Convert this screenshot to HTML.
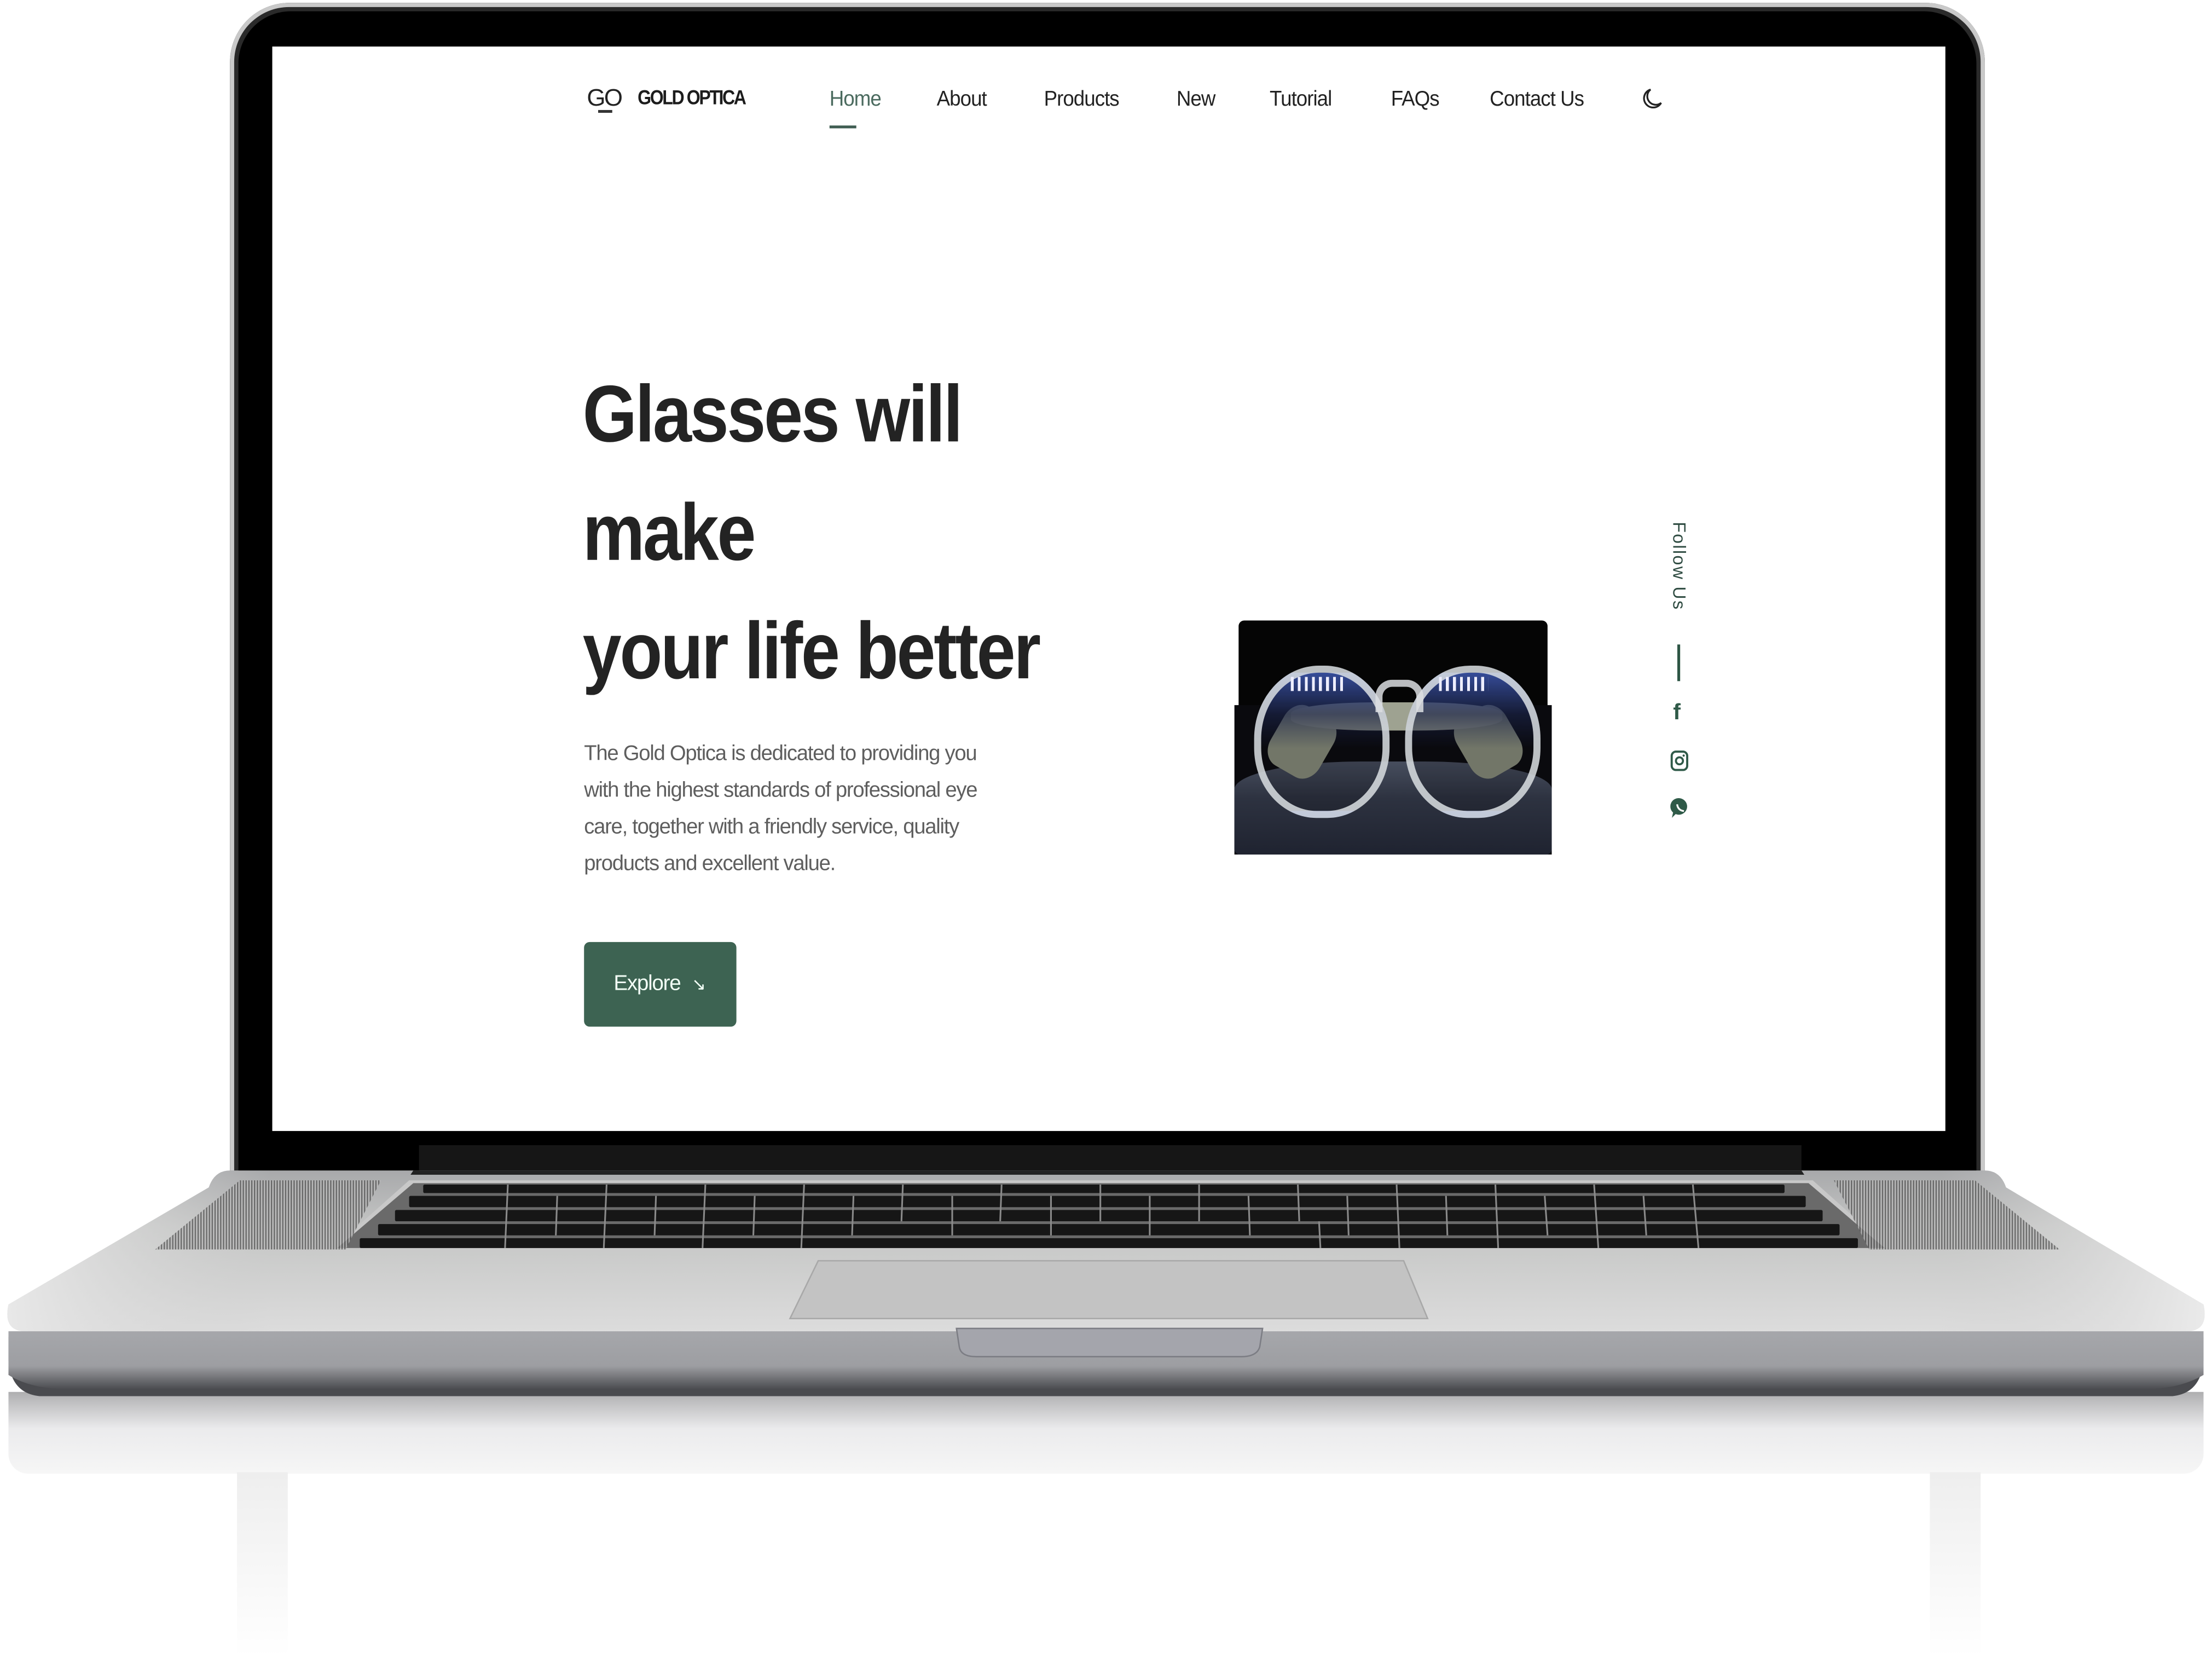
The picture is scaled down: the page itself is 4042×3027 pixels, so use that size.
<!DOCTYPE html>
<html><head><meta charset="utf-8"><style>
html,body{margin:0;padding:0;background:#fff;}
body{width:4042px;height:3027px;overflow:hidden;position:relative;}
#w{position:absolute;left:0;top:0;width:1568px;height:1175px;transform:scale(2.5778,2.5762);transform-origin:0 0;font-family:"Liberation Sans",sans-serif;}
.a{position:absolute;}
.nav{position:absolute;top:62px;font-size:15px;color:#222;letter-spacing:-0.4px;transform:scaleX(.95);transform-origin:0 0;}
p{margin:0}
</style></head><body><div id="w">

<div class="a" style="left:6px;top:987px;width:1556px;height:58px;background:linear-gradient(#9a9a9c,#e6e6e8 45%,#f4f4f4);border-radius:0 0 14px 14px;opacity:.8"></div>
<div class="a" style="left:168px;top:1044px;width:36px;height:131px;background:linear-gradient(#eee,#fff)"></div>
<div class="a" style="left:1368px;top:1044px;width:36px;height:131px;background:linear-gradient(#eee,#fff)"></div>

<div class="a" style="left:163px;top:2px;width:1244px;height:840px;background:#2a2a2a;border-radius:42px 42px 0 0;box-shadow:inset 0 0 0 3px #c9c9c9"></div>
<div class="a" style="left:169px;top:8px;width:1232px;height:834px;background:#000;border-radius:37px 37px 0 0"></div>
<div class="a" style="left:297px;top:812px;width:980px;height:24px;background:#161616"></div>

<svg class="a" style="left:0;top:820px" width="1568" height="180" viewBox="0 820 1568 180">
<defs>
<linearGradient id="dk" x1="0" y1="0" x2="0" y2="1"><stop offset="0" stop-color="#a8a9ab"/><stop offset=".35" stop-color="#c4c5c4"/><stop offset="1" stop-color="#dcdcdc"/></linearGradient>
<linearGradient id="fr" x1="0" y1="0" x2="0" y2="1"><stop offset="0" stop-color="#a6a7ab"/><stop offset=".6" stop-color="#9d9ea2"/><stop offset="1" stop-color="#4b4c50"/></linearGradient>
<linearGradient id="sd" x1="0" y1="0" x2="1" y2="0"><stop offset="0" stop-color="#e8e8e8"/><stop offset=".12" stop-color="#d0d0d0" stop-opacity="0"/><stop offset=".88" stop-color="#d0d0d0" stop-opacity="0"/><stop offset="1" stop-color="#eaeaea"/></linearGradient>
<pattern id="sp" width="2" height="2" patternUnits="userSpaceOnUse"><rect width="1" height="2" fill="#555"/><rect x="1" width="1" height="2" fill="#bbb"/></pattern>
</defs>
<path d="M28 990 Q8 988 6 965 L6 948 L1562 948 L1562 965 Q1560 988 1540 990 Z" fill="#4a4b4f"/>
<path d="M6 944 L1562 944 L1562 975 Q1545 985 1520 985 L48 985 Q22 985 6 975 Z" fill="url(#fr)"/>
<path d="M163 830 L1407 830 Q1418 830 1422 842 L1562 925 Q1566 944 1550 944 L18 944 Q2 944 6 925 L148 842 Q152 830 163 830 Z" fill="url(#dk)"/>
<path d="M163 830 L1407 830 Q1418 830 1422 842 L1562 925 Q1566 944 1550 944 L18 944 Q2 944 6 925 L148 842 Q152 830 163 830 Z" fill="url(#sd)"/>
<path d="M293 830 L1277 830 L1279 833 L291 833 Z" fill="#222"/>
<polygon points="290,837 1285,837 1340,886 235,886" fill="#c8c8c8"/>
<polygon points="293,839 1282,839 1336,885 239,885" fill="#6a6a6a"/>
<g fill="#161616">
<rect x="300" y="840" width="965" height="6" rx="1"/>
<rect x="290" y="848" width="990" height="8" rx="1"/>
<rect x="280" y="858" width="1012" height="8" rx="1"/>
<rect x="268" y="868" width="1036" height="8" rx="1"/>
<rect x="255" y="878" width="1062" height="7" rx="1"/>
</g>
<g stroke="#8a8a8a" stroke-width="1.2">
<line x1="360" y1="840" x2="358" y2="885"/><line x1="430" y1="840" x2="428" y2="885"/><line x1="500" y1="840" x2="498" y2="885"/><line x1="570" y1="840" x2="568" y2="885"/><line x1="640" y1="840" x2="639" y2="866"/><line x1="710" y1="840" x2="709" y2="866"/><line x1="780" y1="840" x2="780" y2="866"/><line x1="850" y1="840" x2="850" y2="866"/><line x1="920" y1="840" x2="921" y2="866"/><line x1="935" y1="866" x2="936" y2="885"/><line x1="990" y1="840" x2="992" y2="885"/><line x1="1060" y1="840" x2="1062" y2="885"/><line x1="1130" y1="840" x2="1133" y2="885"/><line x1="1200" y1="840" x2="1204" y2="885"/>
<line x1="395" y1="848" x2="394" y2="876"/><line x1="465" y1="848" x2="464" y2="876"/><line x1="535" y1="848" x2="534" y2="876"/><line x1="605" y1="848" x2="604" y2="876"/><line x1="675" y1="848" x2="675" y2="876"/><line x1="745" y1="848" x2="745" y2="876"/><line x1="815" y1="848" x2="815" y2="876"/><line x1="885" y1="848" x2="886" y2="876"/><line x1="955" y1="848" x2="956" y2="876"/><line x1="1025" y1="848" x2="1026" y2="876"/><line x1="1095" y1="848" x2="1097" y2="876"/><line x1="1165" y1="848" x2="1167" y2="876"/>
</g>
<polygon points="170,837 270,837 245,886 110,886" fill="url(#sp)" opacity=".8"/>
<polygon points="1300,837 1400,837 1460,886 1325,886" fill="url(#sp)" opacity=".8"/>
<polygon points="580,894 995,894 1012,935 560,935" fill="#c3c3c3" stroke="#a8a8a8" stroke-width="1"/>
<path d="M678 942 L895 942 L893 955 Q891 962 880 962 L692 962 Q681 962 680 955 Z" fill="#a4a5ac" stroke="#7c7d84" stroke-width="1"/>
</svg>

<div class="a" style="left:193px;top:33px;width:1186px;height:769px;background:#fff;overflow:hidden">
 <div style="position:absolute;left:-193px;top:-33px;width:1568px;height:1175px">
  <div class="a" style="left:416px;top:60px;font-size:17px;color:#222;letter-spacing:-1px">GO</div>
  <div class="a" style="left:424px;top:78px;width:10px;height:2px;background:#333"></div>
  <div class="a" style="left:452px;top:62px;font-size:14.5px;font-weight:bold;color:#1c1c1c;letter-spacing:-1.1px;transform:scaleX(.86);transform-origin:0 0">GOLD OPTICA</div>
  <div class="nav" style="left:588px;color:#4a6a5e">Home</div>
  <div class="a" style="left:588px;top:89px;width:19px;height:2px;background:#3f5d52"></div>
  <div class="nav" style="left:664px">About</div>
  <div class="nav" style="left:740px">Products</div>
  <div class="nav" style="left:834px">New</div>
  <div class="nav" style="left:900px">Tutorial</div>
  <div class="nav" style="left:986px">FAQs</div>
  <div class="nav" style="left:1056px">Contact Us</div>
  <svg class="a" style="left:1164px;top:62px" width="15" height="17" viewBox="0 0 15 17"><path d="M6 1.5 A6.5 6.5 0 1 0 13.5 11 A5.5 5.5 0 0 1 6 1.5 Z" fill="none" stroke="#222" stroke-width="1.3"/></svg>

  <div class="a" style="left:413px;top:252px;font-size:57px;font-weight:bold;color:#232323;line-height:84px;letter-spacing:-1.5px;transform:scaleX(.87);transform-origin:0 0;white-space:nowrap">Glasses will<br>make<br>your life better</div>
  <div class="a" style="left:414px;top:522px;font-size:15px;color:#5e5e5e;line-height:26px;letter-spacing:-0.5px;white-space:nowrap;transform:scaleX(.99);transform-origin:0 0">The Gold Optica is dedicated to providing you<br>with the highest standards of professional eye<br>care, together with a friendly service, quality<br>products and excellent value.</div>
  <div class="a" style="left:414px;top:668px;width:108px;height:60px;background:#3d6352;border-radius:4px;color:#f2fff6;font-size:15px;line-height:60px;letter-spacing:-0.5px"><span style="margin-left:21px">Explore</span><span style="margin-left:8px;font-size:12px">↘</span></div>

  <div class="a" style="left:875px;top:440px;width:225px;height:166px;overflow:hidden">
   <div class="a" style="left:3px;top:0;width:219px;height:110px;background:#050505;border-radius:4px 4px 0 0"></div>
   <div class="a" style="left:0;top:60px;width:225px;height:106px;background:#0a0a0e"></div>
   <div class="a" style="left:0;top:100px;width:225px;height:66px;background:linear-gradient(#474e5e,#2d3240 40%,#1f2330);border-radius:40% 40% 4px 4px/30% 30% 4px 4px"></div>
   <div class="a" style="left:28px;top:62px;width:40px;height:48px;background:#8d927f;border-radius:30%;transform:rotate(30deg)"></div>
   <div class="a" style="left:160px;top:62px;width:40px;height:48px;background:#8d927f;border-radius:30%;transform:rotate(-30deg)"></div>
   <div class="a" style="left:40px;top:58px;width:150px;height:20px;background:#9ea291;border-radius:40%"></div>
   <div class="a" style="left:14px;top:32px;width:86px;height:98px;border-radius:48% 48% 46% 46%;border:5px solid rgba(220,224,228,.85);background:linear-gradient(rgba(60,85,170,.9) 0%,rgba(26,34,69,.7) 30%,rgba(10,10,15,.2) 55%)"></div>
   <div class="a" style="left:121px;top:32px;width:86px;height:98px;border-radius:48% 48% 46% 46%;border:5px solid rgba(220,224,228,.85);background:linear-gradient(rgba(60,85,170,.9) 0%,rgba(26,34,69,.7) 30%,rgba(10,10,15,.2) 55%)"></div>
   <div class="a" style="left:100px;top:42px;width:24px;height:18px;border:5px solid rgba(220,222,226,.85);border-bottom:none;border-radius:12px 12px 0 0"></div>
   <div class="a" style="left:40px;top:40px;width:40px;height:10px;background:repeating-linear-gradient(90deg,#eef 0 2px,transparent 2px 5px)"></div>
   <div class="a" style="left:145px;top:40px;width:35px;height:10px;background:repeating-linear-gradient(90deg,#eef 0 2px,transparent 2px 5px)"></div>
  </div>

  <div class="a" style="left:1183px;top:370px;width:14px;height:72px"><div style="position:absolute;left:0;top:0;transform:rotate(90deg) translate(0,-14px);transform-origin:0 0;white-space:nowrap;font-size:12.5px;color:#2d4a40;letter-spacing:.9px">Follow Us</div></div>
  <div class="a" style="left:1189px;top:457px;width:2px;height:26px;background:#2d5544"></div>
  <div class="a" style="left:1186px;top:497px;font-size:16px;font-weight:bold;color:#2f5a48">f</div>
  <svg class="a" style="left:1184px;top:532px" width="13" height="15" viewBox="0 0 13 15"><rect x="1" y="1" width="11" height="13" rx="3" fill="none" stroke="#2f5a48" stroke-width="1.5"/><circle cx="6.5" cy="7.5" r="2.5" fill="none" stroke="#2f5a48" stroke-width="1.4"/><circle cx="9.5" cy="3.8" r=".8" fill="#2f5a48"/></svg>
  <svg class="a" style="left:1184px;top:565px" width="14" height="16" viewBox="0 0 13 15"><path d="M6.5 1 A5.5 5.5 0 1 1 3.5 11.5 L1 14 L1.8 10.5 A5.5 5.5 0 0 1 6.5 1 Z" fill="#2f5a48"/><path d="M4.5 5 Q5 9 9 9.5" stroke="#fff" stroke-width="1.2" fill="none"/></svg>
 </div>
</div>

</div></body></html>
